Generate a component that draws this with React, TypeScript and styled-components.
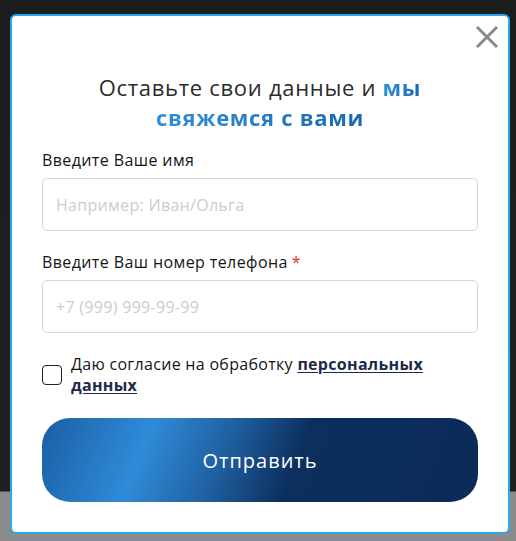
import React, { useState } from "react";
import styled, { createGlobalStyle } from "styled-components";

// Styles
const GlobalStyle = createGlobalStyle`
  html, body {
    margin: 0;
    padding: 0;
    background: #1c1d1f;
  }
  * {
    box-sizing: border-box;
  }
`;

const Backdrop = styled.div`
  min-height: 541px;
  padding: 14px 6px 8px 10px;
  background: linear-gradient(to bottom, #1c1d1f 0, #1f2022 491px, #8b8b8b 492px, #8b8b8b 100%);
  font-family: "Open Sans", "Noto Sans", sans-serif;
`;

const Modal = styled.div`
  position: relative;
  width: 500px;
  background: #ffffff;
  border: 2px solid #2aa6ec;
  border-radius: 6px;
  padding: 56px 30px 30px 30px;
`;

const CloseButton = styled.button`
  position: absolute;
  top: 8px;
  right: 8px;
  width: 26px;
  height: 26px;
  padding: 0;
  border: none;
  background: none;
  cursor: pointer;
  display: flex;
  align-items: center;
  justify-content: center;
`;

const Title = styled.h2`
  margin: 0 0 18px;
  text-align: center;
  font-size: 22px;
  line-height: 30px;
  font-weight: 500;
  color: #2b2b2b;
  letter-spacing: 0.7px;

  span {
    font-weight: 700;
    background: linear-gradient(90deg, #2f8fd8 0%, #1c67b0 100%);
    -webkit-background-clip: text;
    background-clip: text;
    color: transparent;
  }
`;

const Field = styled.label`
  display: flex;
  flex-direction: column;
  gap: 8px;
  margin-bottom: 21px;
`;

const LabelText = styled.span`
  font-size: 16px;
  line-height: 20px;
  color: #151515;
  letter-spacing: 0.4px;

  em {
    font-style: normal;
    color: #d9342b;
    margin-left: 4px;
  }
`;

const Input = styled.input`
  height: 53px;
  width: 100%;
  border: 1px solid #d6d6d6;
  border-radius: 5px;
  padding: 0 13px;
  font-family: inherit;
  font-size: 16px;
  letter-spacing: 0.3px;
  color: #222;
  outline: none;

  &::placeholder {
    color: #c9cdd4;
  }
`;

const ConsentRow = styled.label`
  display: flex;
  align-items: center;
  gap: 9px;
  margin-top: 2px;
  margin-bottom: 22px;
`;

const Box = styled.span<{ $checked: boolean }>`
  flex: 0 0 20px;
  width: 20px;
  height: 20px;
  border: 1.5px solid #222;
  border-radius: 4px;
  background: ${(p) => (p.$checked ? "#1c67b0" : "#fff")};
`;

const ConsentText = styled.span`
  font-size: 16px;
  line-height: 21px;
  color: #151515;
  letter-spacing: 0.3px;

  a {
    color: #1b2a48;
    font-weight: 700;
    text-decoration: underline;
    text-underline-offset: 2px;
  }
`;

const Submit = styled.button`
  width: 100%;
  height: 84px;
  border: none;
  border-radius: 28px;
  cursor: pointer;
  color: #ffffff;
  font-family: inherit;
  font-size: 20px;
  letter-spacing: 1px;
  background: linear-gradient(
    112deg,
    #1a5ea4 0%,
    #2f8bd8 24%,
    #1f5f9f 42%,
    #0c2f5e 58%,
    #0b2b58 100%
  );
`;

// Component
const App: React.FC = () => {
  const [checked, setChecked] = useState(false);

  return (
    <>
      <GlobalStyle />
      <Backdrop>
        <Modal>
          <CloseButton aria-label="Закрыть">
            <svg width="24" height="24" viewBox="0 0 24 24">
              <path d="M2 2 L22 22 M22 2 L2 22" stroke="#8a8a8a" strokeWidth="3" />
            </svg>
          </CloseButton>
          <Title>
            Оставьте свои данные и <span>мы</span>
            <br />
            <span>свяжемся с вами</span>
          </Title>
          <Field>
            <LabelText>Введите Ваше имя</LabelText>
            <Input placeholder="Например: Иван/Ольга" />
          </Field>
          <Field>
            <LabelText>
              Введите Ваш номер телефона<em>*</em>
            </LabelText>
            <Input placeholder="+7 (999) 999-99-99" />
          </Field>
          <ConsentRow onClick={() => setChecked(!checked)}>
            <Box $checked={checked} />
            <ConsentText>
              Даю согласие на обработку <a href="#">персональных данных</a>
            </ConsentText>
          </ConsentRow>
          <Submit>Отправить</Submit>
        </Modal>
      </Backdrop>
    </>
  );
};

export default App;
